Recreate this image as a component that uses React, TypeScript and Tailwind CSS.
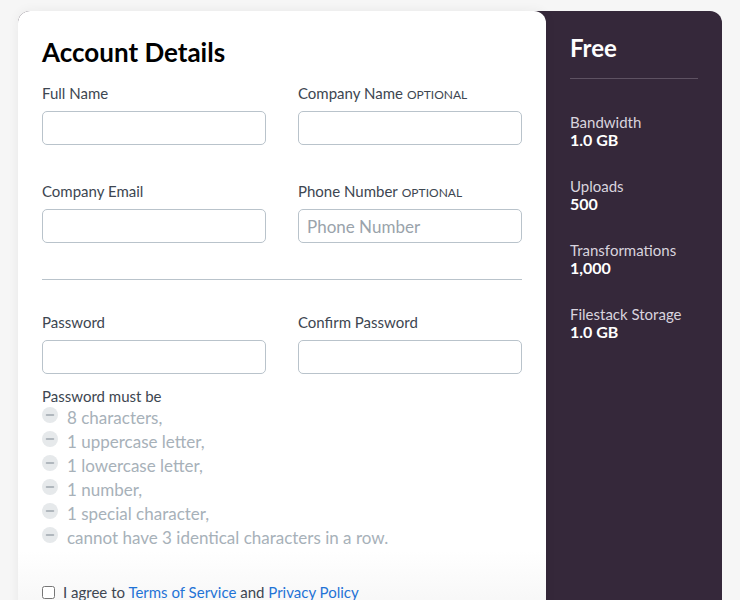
import { Minus } from 'lucide-react';

const font = { fontFamily: 'Lato, "Noto Sans", sans-serif' };

function Field({ label, optional, placeholder }: { label: string; optional?: boolean; placeholder?: string }) {
  return (
    <label className="flex flex-col">
      <span className="h-5 text-[15px] leading-5 text-[#3d4651]">
        {label}
        {optional && <span className="ml-1 align-baseline text-[12px] leading-none uppercase text-[#3d4651]">Optional</span>}
      </span>
      <input
        placeholder={placeholder}
        className="mt-[8px] h-[34px] w-full rounded-[5px] border border-[#b9c3cb] bg-white px-2 text-[17px] text-[#333] placeholder:text-[#9aa3ab] outline-none"
      />
    </label>
  );
}

const rules = [
  '8 characters,',
  '1 uppercase letter,',
  '1 lowercase letter,',
  '1 number,',
  '1 special character,',
  'cannot have 3 identical characters in a row.',
];

const stats = [
  ['Bandwidth', '1.0 GB'],
  ['Uploads', '500'],
  ['Transformations', '1,000'],
  ['Filestack Storage', '1.0 GB'],
];

export default function App() {
  return (
    <div style={font} className="h-[600px] overflow-hidden bg-[#f6f6f6] pl-[18px] pr-[18px] pt-[11px]">
      <div className="flex h-[620px] rounded-xl bg-[#35283a]">
        <div className="relative flex w-[528px] shrink-0 flex-col rounded-xl bg-white px-6 pt-[25px] shadow-[0_0_12px_rgba(0,0,0,0.06)]">
          <h1 className="text-[26px] font-bold leading-8 text-black">Account Details</h1>

          <div className="mt-[15px] grid grid-cols-2 gap-x-8 gap-y-[36px]">
            <Field label="Full Name" />
            <Field label="Company Name" optional />
            <Field label="Company Email" />
            <Field label="Phone Number" optional placeholder="Phone Number" />
          </div>

          <hr className="mt-[36px] border-t border-[#b9c3cb]" />

          <div className="mt-[32px] grid grid-cols-2 gap-x-8">
            <Field label="Password" />
            <Field label="Confirm Password" />
          </div>

          <p className="mt-[12px] text-[15px] leading-5 text-[#3d4651]">Password must be</p>
          <ul className="flex flex-col">
            {rules.map((r) => (
              <li key={r} className="flex h-6 items-center text-[17px] text-[#a7b1b9]">
                <span className="mr-[9px] mt-[1px] flex size-4 items-center justify-center self-start rounded-full bg-[#e6e9eb]">
                  <Minus className="size-3 text-[#9ea7ae]" strokeWidth={3} />
                </span>
                {r}
              </li>
            ))}
          </ul>

          <div className="absolute inset-x-0 bottom-0 h-[80px] rounded-b-xl bg-gradient-to-b from-white/0 to-[#eeeeee]/70" />

          <div className="relative mt-[32px] flex items-center gap-2 text-[15px] leading-5 text-[#3d4651]">
            <input type="checkbox" className="size-[13px]" />
            <span>
              I agree to <a className="text-[#1f73d6]">Terms of Service</a> and{' '}
              <a className="text-[#1f73d6]">Privacy Policy</a>
            </span>
          </div>
        </div>

        <aside className="flex-1 px-6 pt-[21px] text-white">
          <h2 className="text-[24px] font-bold leading-8">Free</h2>
          <div className="mt-[14px] border-t border-[#5e5262]" />
          <div className="mt-[34px] flex flex-col gap-[28px]">
            {stats.map(([k, v]) => (
              <div key={k} className="flex flex-col">
                <span className="text-[15px] leading-[18px] text-[#d9d4de]">{k}</span>
                <span className="text-[16px] font-bold leading-[18px]">{v}</span>
              </div>
            ))}
          </div>
        </aside>
      </div>
    </div>
  );
}
